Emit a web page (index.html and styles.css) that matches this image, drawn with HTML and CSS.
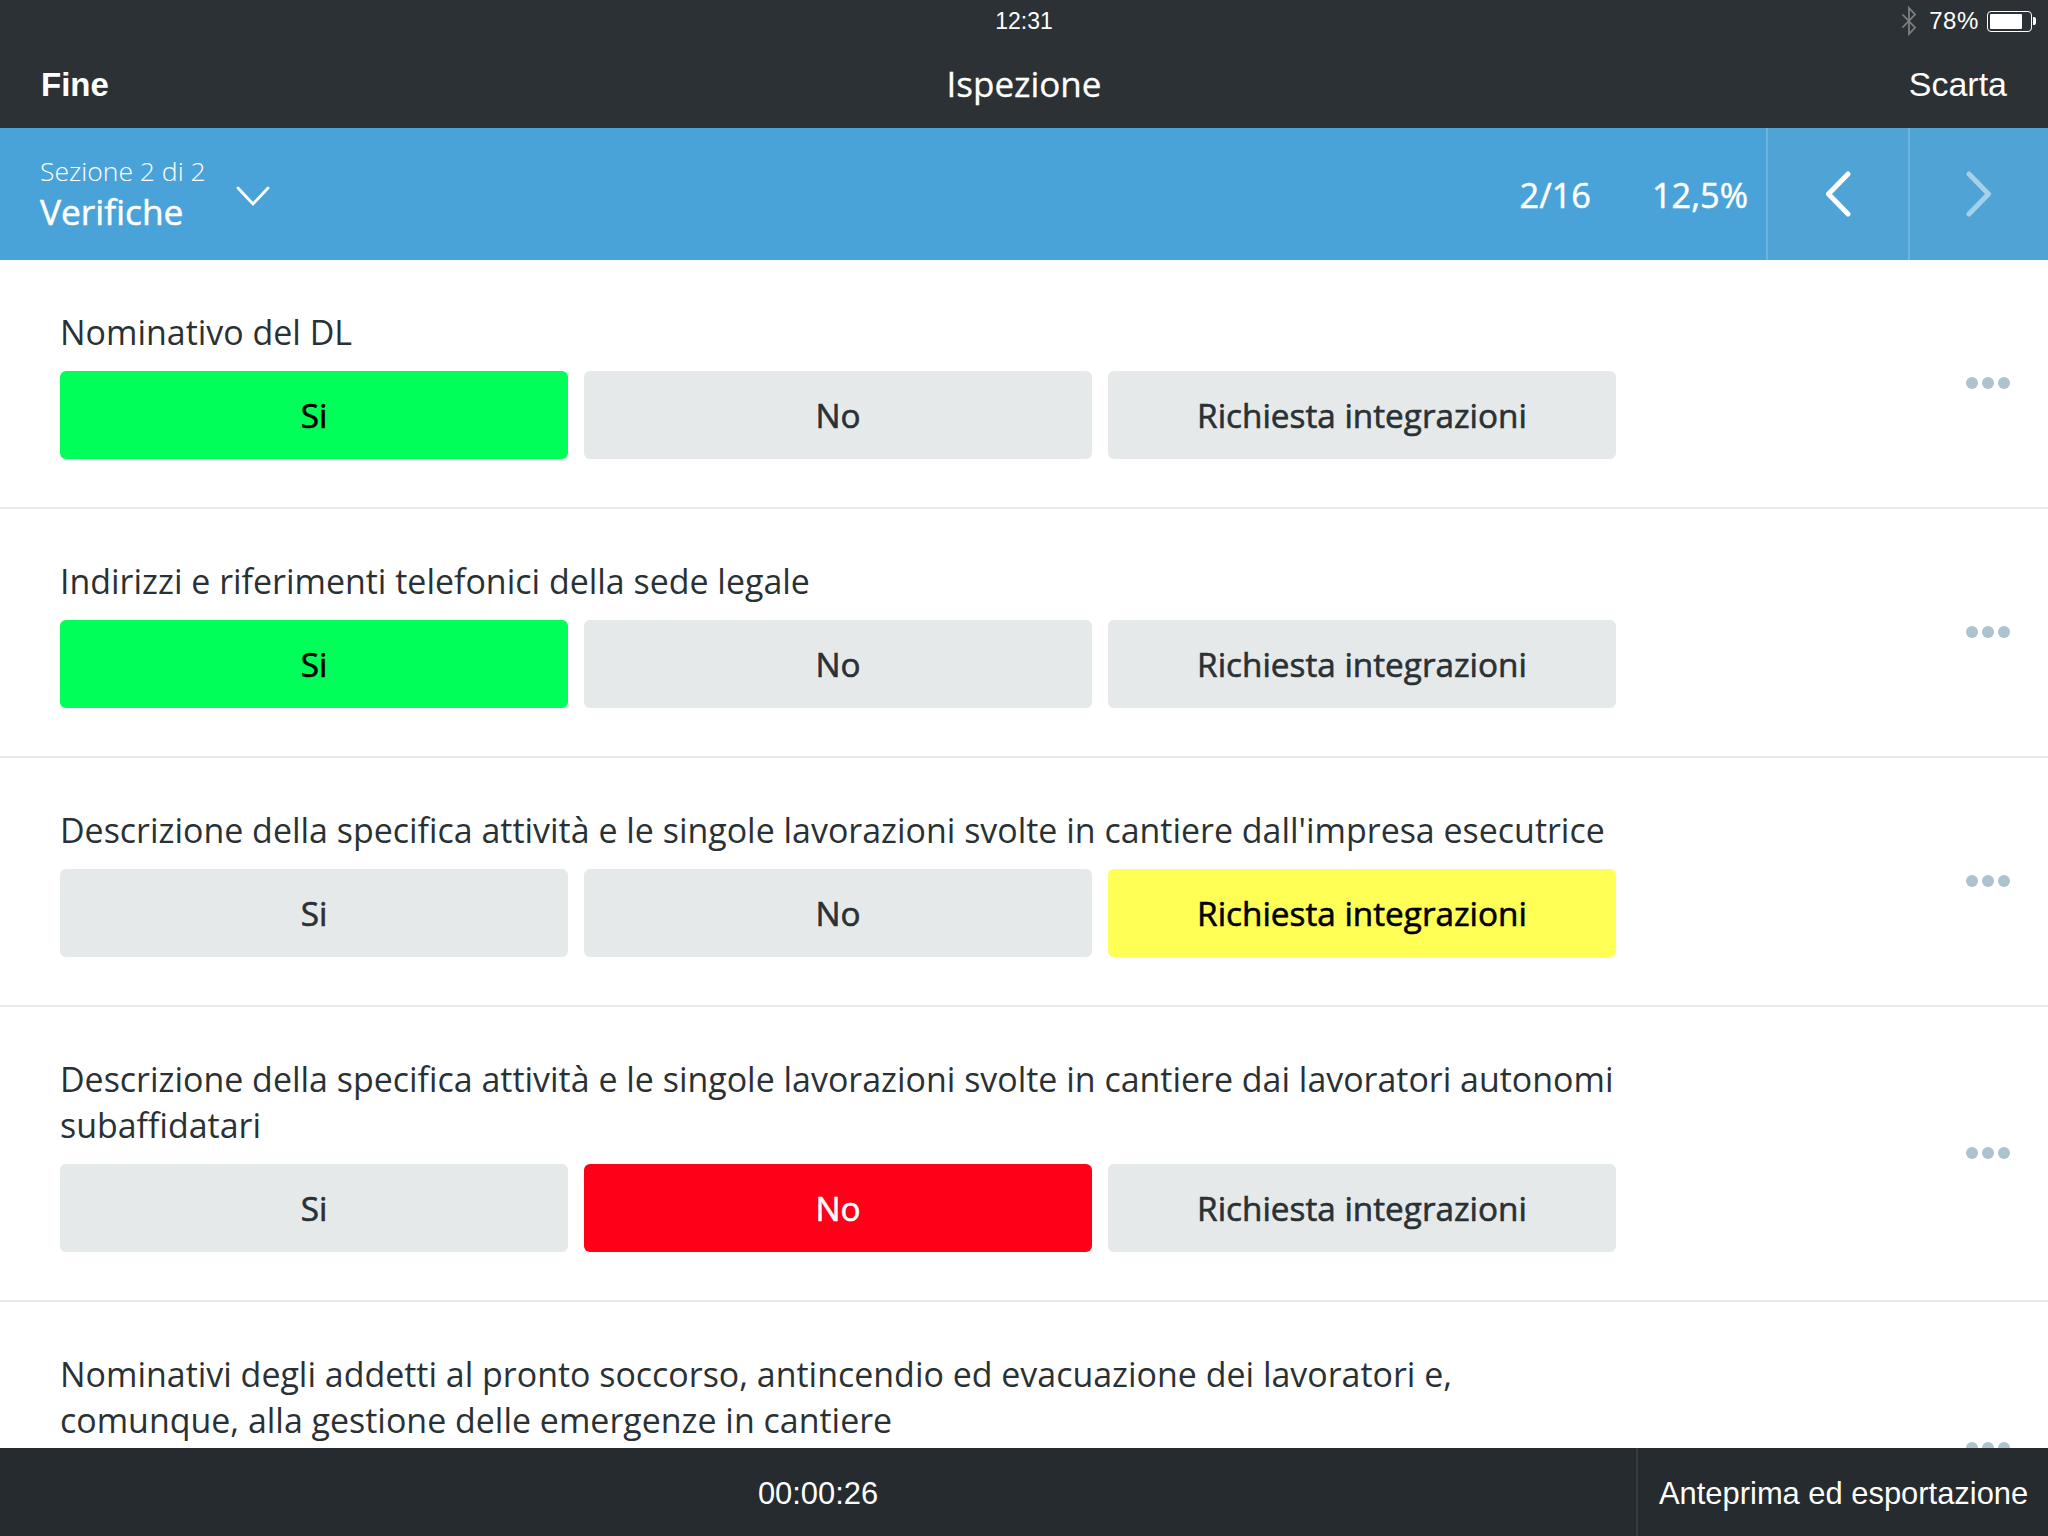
FILE: index.html
```html
<!DOCTYPE html>
<html lang="it">
<head>
<meta charset="utf-8">
<title>Ispezione</title>
<link rel="stylesheet" href="styles.css">
</head>
<body>
<div class="app">
  <header class="topbar">
    <div class="status">
      <span></span>
      <span class="clock">12:31</span>
      <span class="status-right">
        <svg class="bt" width="16" height="30" viewBox="0 0 16 30"><path d="M1.5 8.5 L14 21.5 L8 28 V2 L14 8.5 L1.5 21.5" fill="none" stroke="#7c8083" stroke-width="1.8"/></svg>
        <span class="batt-pct">78%</span>
        <span class="battery"><span class="battery-fill"></span></span><span class="battery-tip"></span>
      </span>
    </div>
    <div class="nav">
      <span class="nav-left">Fine</span>
      <span class="nav-title">Ispezione</span>
      <span class="nav-right">Scarta</span>
    </div>
  </header>

  <section class="sectionbar">
    <div class="section-info">
      <div class="section-sub">Sezione 2 di 2</div>
      <div class="section-name">Verifiche</div>
    </div>
    <svg class="section-caret" width="34" height="20" viewBox="0 0 34 20"><path d="M2 2 L17 18 L32 2" fill="none" stroke="#fff" stroke-width="2.8" stroke-linecap="round"/></svg>
    <div class="counts">
      <span class="count-a">2/16</span>
      <span class="count-b">12,5%</span>
    </div>
    <div class="navcell">
      <svg width="26" height="46" viewBox="0 0 26 46"><path d="M23 3 L3.500 23 L23 43" fill="none" stroke="#fff" stroke-width="5" stroke-linecap="round" stroke-linejoin="round"/></svg>
    </div>
    <div class="navcell navcell-last">
      <svg width="26" height="46" viewBox="0 0 26 46"><path d="M3 3 L22.500 23 L3 43" fill="none" stroke="#a5d0ea" stroke-width="5" stroke-linecap="round" stroke-linejoin="round"/></svg>
    </div>
  </section>

  <main class="list">
    <article class="row">
      <div class="row-body">
        <h2 class="q">Nominativo del DL</h2>
        <div class="opts"><div class="opt opt-yes">Si</div><div class="opt">No</div><div class="opt">Richiesta integrazioni</div></div>
      </div>
      <div class="dots"><i></i><i></i><i></i></div>
    </article>
    <article class="row">
      <div class="row-body">
        <h2 class="q">Indirizzi e riferimenti telefonici della sede legale</h2>
        <div class="opts"><div class="opt opt-yes">Si</div><div class="opt">No</div><div class="opt">Richiesta integrazioni</div></div>
      </div>
      <div class="dots"><i></i><i></i><i></i></div>
    </article>
    <article class="row">
      <div class="row-body">
        <h2 class="q">Descrizione della specifica attività e le singole lavorazioni svolte in cantiere dall'impresa esecutrice</h2>
        <div class="opts"><div class="opt">Si</div><div class="opt">No</div><div class="opt opt-req">Richiesta integrazioni</div></div>
      </div>
      <div class="dots"><i></i><i></i><i></i></div>
    </article>
    <article class="row">
      <div class="row-body">
        <h2 class="q">Descrizione della specifica attività e le singole lavorazioni svolte in cantiere dai lavoratori autonomi subaffidatari</h2>
        <div class="opts"><div class="opt">Si</div><div class="opt opt-no">No</div><div class="opt">Richiesta integrazioni</div></div>
      </div>
      <div class="dots"><i></i><i></i><i></i></div>
    </article>
    <article class="row">
      <div class="row-body">
        <h2 class="q">Nominativi degli addetti al pronto soccorso, antincendio ed evacuazione dei lavoratori e, comunque, alla gestione delle emergenze in cantiere</h2>
        <div class="opts"><div class="opt"></div><div class="opt"></div><div class="opt"></div></div>
      </div>
      <div class="dots"><i></i><i></i><i></i></div>
    </article>
  </main>

  <footer class="footer">
    <div class="timer">00:00:26</div>
    <div class="export">Anteprima ed esportazione</div>
  </footer>
</div>
</body>
</html>
```

FILE: styles.css
```css
* { box-sizing: border-box; }
html, body { margin: 0; padding: 0; background: #fff; }
.app {
  width: 2048px;
  height: 1536px;
  display: flex;
  flex-direction: column;
  overflow: hidden;
  font-family: "Open Sans", sans-serif;
  color: #2a3135;
}
.topbar {
  height: 128px;
  background: #2c3135;
  color: #fff;
  font-family: "Liberation Sans", sans-serif;
  flex: none;
}
.status {
  height: 42px;
  display: grid;
  grid-template-columns: 1fr auto 1fr;
  align-items: center;
  padding: 0 12px;
  font-size: 23px;
}
.status-right {
  display: flex;
  justify-content: flex-end;
  align-items: center;
}
.bt { margin-right: 12px; }
.batt-pct { margin-right: 8px; font-size: 24px; letter-spacing: 0.6px; }
.battery {
  width: 45px;
  height: 21px;
  border: 1px solid #fff;
  border-radius: 4px;
  padding: 2px;
  display: block;
}
.battery-fill { display: block; width: 32px; height: 100%; background: #fff; border-radius: 1px; }
.battery-tip { width: 3px; height: 8px; background: #fff; margin-left: 1px; border-radius: 0 2px 2px 0; }
.nav {
  height: 85px;
  padding: 0 41px;
  display: grid;
  grid-template-columns: 1fr auto 1fr;
  align-items: center;
  font-size: 34px;
}
.nav-left { font-weight: 700; font-size: 33px; }
.nav-title {
  font-family: "Open Sans", sans-serif;
  font-size: 35px;
  font-weight: 400;
  margin-bottom: 3px;
  -webkit-text-stroke: 0.3px #fff;
}
.nav-right { text-align: right; }

.sectionbar {
  height: 132px;
  flex: none;
  background: #4aa3d8;
  color: #fff;
  display: flex;
  align-items: center;
}
.section-info { margin-left: 40px; }
.section-sub { font-size: 26.5px; font-weight: 300; line-height: 34px; }
.section-name { font-size: 35.3px; font-weight: 400; line-height: 46px; -webkit-text-stroke: 0.5px #fff; }
.section-caret { margin-left: 30px; margin-top: 4px; }
.counts {
  margin-left: auto;
  display: flex;
  gap: 61px;
  font-size: 34.3px;
  font-weight: 400;
  -webkit-text-stroke: 0.5px #fff;
  padding-right: 18px;
}
.navcell {
  width: 142px;
  height: 100%;
  background: #4fa4d5;
  border-left: 2px solid #6db3df;
  display: flex;
  align-items: center;
  justify-content: center;
}
.navcell-last { width: 140px; }

.list {
  flex: 1;
  min-height: 0;
  overflow: hidden;
}
.row {
  display: flex;
  align-items: center;
  padding: 49px 0 48px 60px;
  border-bottom: 2px solid #e8eaeb;
}
.row-body { width: 1560px; }
.q {
  margin: 0 0 16px;
  font-size: 33.95px;
  line-height: 46px;
  font-weight: 400;
  color: #2a3135;
}
.opts { display: flex; gap: 16px; }
.opt {
  width: 508px;
  height: 88px;
  border-radius: 6px;
  background: #e6e9ea;
  display: flex;
  align-items: center;
  justify-content: center;
  font-size: 33.3px;
  font-weight: 400;
  -webkit-text-stroke: 0.6px currentColor;
}
.opt-yes { background: #00ff59; color: #000; }
.opt-req { background: #ffff55; color: #000; }
.opt-no { background: #ff0019; color: #fff; }
.dots {
  margin-left: auto;
  margin-right: 38px;
  margin-bottom: 3px;
  display: flex;
  gap: 4px;
}
.dots i {
  width: 12px;
  height: 12px;
  border-radius: 50%;
  background: #adc3d0;
  display: block;
}
.footer {
  height: 88px;
  flex: none;
  background: #252b2e;
  color: #fff;
  display: flex;
  align-items: center;
  font-family: "Liberation Sans", sans-serif;
  font-size: 30.9px;
}
.timer { flex: 1; text-align: center; padding-top: 3px; }
.export {
  width: 412px;
  height: 100%;
  border-left: 2px solid #363c40;
  display: flex;
  align-items: center;
  padding: 3px 0 0 21px;
}
```
